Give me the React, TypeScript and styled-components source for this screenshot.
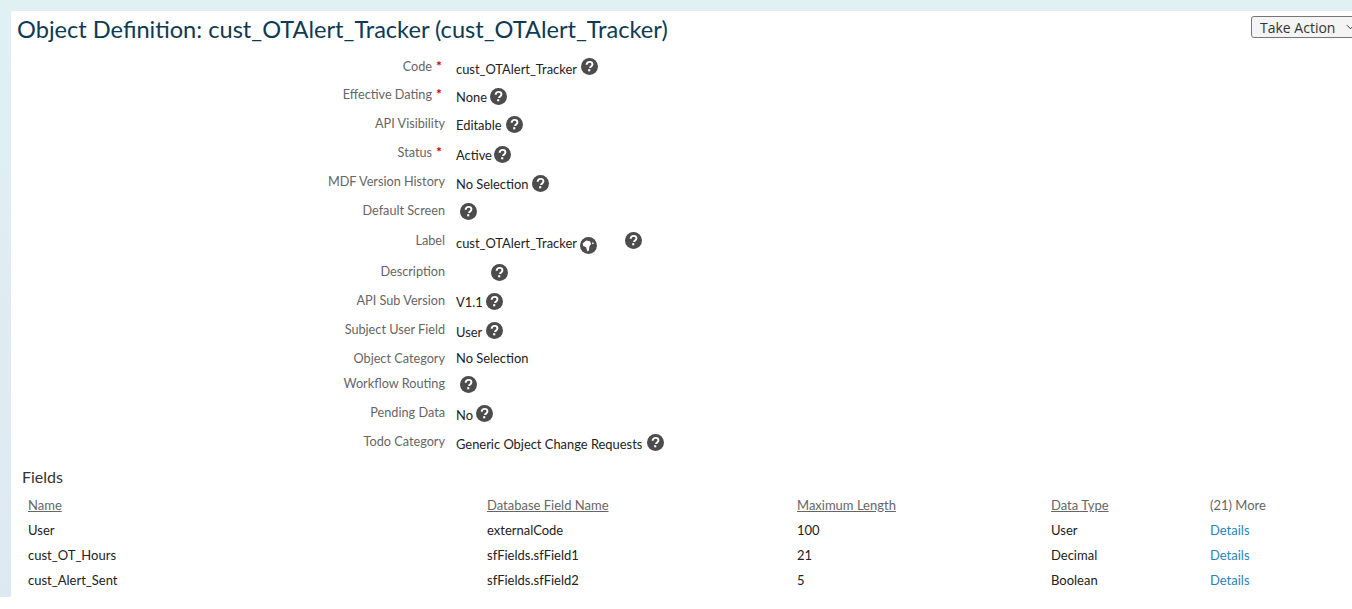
import React from 'react';
import styled, { createGlobalStyle } from 'styled-components';

const GlobalStyle = createGlobalStyle`
  html, body {
    margin: 0;
    padding: 0;
    background: #fff;
    overflow: hidden;
  }
`;

type FormField = {
  label: string;
  labelTop?: number;
  value?: string;
  required?: boolean;
  height: number;
  valueTop?: number;
  help?: number;
  helpTop?: number;
  globe?: boolean;
};

const formFields: FormField[] = [
  { label: 'Code', labelTop: 5, value: 'cust_OTAlert_Tracker', required: true, height: 29, valueTop: 8, help: 4, helpTop: -3 },
  { label: 'Effective Dating', value: 'None', required: true, height: 29, help: 3, helpTop: -1 },
  { label: 'API Visibility', value: 'Editable', height: 29, valueTop: 6, help: 4, helpTop: -1 },
  { label: 'Status', value: 'Active', required: true, height: 29, help: 2, helpTop: -1 },
  { label: 'MDF Version History', value: 'No Selection', height: 29, help: 4, helpTop: -1 },
  { label: 'Default Screen', height: 30, help: 4 },
  { label: 'Label', value: 'cust_OTAlert_Tracker', height: 31, globe: true, help: 28, helpTop: -3 },
  { label: 'Description', height: 29, help: 35 },
  { label: 'API Sub Version', value: 'V1.1', height: 29, valueTop: 6, help: 3, helpTop: -1 },
  { label: 'Subject User Field', value: 'User', height: 29, help: 4 },
  { label: 'Object Category', value: 'No Selection', height: 25, valueTop: 4 },
  { label: 'Workflow Routing', height: 29, help: 4 },
  { label: 'Pending Data', value: 'No', height: 29, help: 3 },
  { label: 'Todo Category', value: 'Generic Object Change Requests', height: 29, help: 5 },
];

const fieldRows = [
  { name: 'User', dbName: 'externalCode', maxLength: '100', type: 'User' },
  { name: 'cust_OT_Hours', dbName: 'sfFields.sfField1', maxLength: '21', type: 'Decimal' },
  { name: 'cust_Alert_Sent', dbName: 'sfFields.sfField2', maxLength: '5', type: 'Boolean' },
];

const HelpIcon = () => (
  <HelpSvg viewBox="0 0 18 18">
    <circle cx="9" cy="9" r="9" fill="#4c4c4c" />
    <path
      d="M6 7.1c0-1.8 1.3-3 3.1-3 1.8 0 3 1.1 3 2.6 0 1.2-.7 1.8-1.5 2.4-.7.5-1 .8-1 1.6"
      fill="none"
      stroke="#fff"
      strokeWidth="2.1"
    />
    <rect x="7.6" y="11.8" width="2.2" height="2.3" fill="#fff" />
  </HelpSvg>
);

const GlobeIcon = () => (
  <GlobeSvg viewBox="0 0 18 18">
    <circle cx="9" cy="9" r="9" fill="#4c4c4c" />
    <path d="M2.8 7 6.6 3.8l4 .6 1.2 3-1.8 2.4-.5 4.4-1.7 1.2-1.4-4.6-3-1.4z" fill="#fff" />
    <circle cx="13.6" cy="6.6" r="1" fill="#ddd" />
  </GlobeSvg>
);

const App = () => {
  return (
    <Page>
      <GlobalStyle />
      <Sheet>
        <TitleBar>
          <Title>Object Definition: cust_OTAlert_Tracker (cust_OTAlert_Tracker)</Title>
          <ActionButton>
            Take Action
            <Chevron viewBox="0 0 10 6">
              <path d="M1 1l4 4 4-4" fill="none" stroke="#333" strokeWidth="1.1" />
            </Chevron>
          </ActionButton>
        </TitleBar>

        <Form>
          {formFields.map((field) => (
            <FormRow key={field.label} $height={field.height}>
              <FieldLabel $top={field.labelTop ?? 4}>
                {field.label}
                {field.required && <Required>*</Required>}
              </FieldLabel>
              <FieldValue $top={field.valueTop ?? 7}>
                {field.value}
                {field.globe && <GlobeIcon />}
                {field.help !== undefined && (
                  <HelpSlot $gap={field.help} $top={field.helpTop ?? -2}>
                    <HelpIcon />
                  </HelpSlot>
                )}
              </FieldValue>
            </FormRow>
          ))}
        </Form>

        <SectionTitle>Fields</SectionTitle>
        <FieldsTable>
          <thead>
            <tr>
              <HeadCell><SortLink>Name</SortLink></HeadCell>
              <HeadCell><SortLink>Database Field Name</SortLink></HeadCell>
              <HeadCell><SortLink>Maximum Length</SortLink></HeadCell>
              <HeadCell><SortLink>Data Type</SortLink></HeadCell>
              <HeadCell>(21) More</HeadCell>
            </tr>
          </thead>
          <tbody>
            {fieldRows.map((row) => (
              <tr key={row.name}>
                <Cell>{row.name}</Cell>
                <Cell>{row.dbName}</Cell>
                <Cell>{row.maxLength}</Cell>
                <Cell>{row.type}</Cell>
                <Cell><DetailsLink>Details</DetailsLink></Cell>
              </tr>
            ))}
          </tbody>
        </FieldsTable>
      </Sheet>
    </Page>
  );
};

export default App;

const Page = styled.div`
  width: 1352px;
  height: 609px;
  box-sizing: border-box;
  overflow: hidden;
  background: linear-gradient(to bottom, #e0f0f3 0, #dde9f1 100%);
  padding: 11px 0 12px 11px;
  position: relative;
  font-family: 'Lato', 'Liberation Sans', sans-serif;

  &::after {
    content: '';
    position: absolute;
    left: 0;
    right: 0;
    bottom: 0;
    height: 12px;
    background: #fff;
  }
`;

const Sheet = styled.main`
  background: #fff;
  height: 586px;
  border-radius: 2px 0 0 0;
  overflow: hidden;
`;

const TitleBar = styled.header`
  display: flex;
  justify-content: space-between;
  align-items: flex-start;
  height: 42px;
  padding: 5px 0 0 6px;
  box-sizing: border-box;
`;

const Title = styled.h1`
  margin: 0;
  font-size: 23.6px;
  line-height: 26px;
  font-weight: 400;
  color: #0e3a54;
  white-space: nowrap;
`;

const ActionButton = styled.button`
  display: flex;
  align-items: center;
  width: 110px;
  height: 22px;
  margin-right: -9px;
  padding: 0 0 0 8px;
  box-sizing: border-box;
  background: #f4f4f4;
  border: 1px solid #767676;
  border-radius: 3px;
  font-family: 'Open Sans', 'Liberation Sans', sans-serif;
  font-size: 14px;
  color: #333;
  white-space: nowrap;
`;

const Chevron = styled.svg`
  width: 9px;
  height: 6px;
  margin-left: 11px;
  flex: none;
`;

const Form = styled.section`
  display: flex;
  flex-direction: column;
`;

const FormRow = styled.div<{ $height: number }>`
  display: grid;
  grid-template-columns: 434px 1fr;
  height: ${(props) => props.$height}px;
  column-gap: 11px;
`;

const FieldLabel = styled.div<{ $top: number }>`
  text-align: right;
  font-size: 12.7px;
  line-height: 16px;
  padding-top: ${(props) => props.$top}px;
  color: #666;
  white-space: nowrap;
`;

const Required = styled.span`
  color: #c00;
  font-size: 14px;
  font-weight: 700;
  margin-left: 4px;
  margin-right: 3px;
`;

const FieldValue = styled.div<{ $top: number }>`
  display: flex;
  align-items: flex-start;
  font-size: 12.9px;
  line-height: 16px;
  padding-top: ${(props) => props.$top}px;
  color: #222;
  white-space: nowrap;
`;

const HelpSlot = styled.span<{ $gap: number; $top: number }>`
  margin-left: ${(props) => props.$gap}px;
  margin-top: ${(props) => props.$top}px;
  display: inline-flex;
`;

const HelpSvg = styled.svg`
  width: 17px;
  height: 17px;
`;

const GlobeSvg = styled.svg`
  width: 17px;
  height: 17px;
  margin-left: 3px;
  margin-top: 2px;
`;

const SectionTitle = styled.h2`
  margin: 9px 0 0 11px;
  font-size: 16px;
  line-height: 20px;
  font-weight: 400;
  color: #333;
`;

const FieldsTable = styled.table`
  border-collapse: collapse;
  table-layout: fixed;
  width: 1300px;
  margin: 5px 0 0 12px;
  font-size: 13px;

  th:nth-child(1) { width: 454px; }
  th:nth-child(2) { width: 305px; }
  th:nth-child(3) { width: 249px; }
  th:nth-child(4) { width: 154px; }
`;

const HeadCell = styled.th`
  text-align: left;
  font-weight: 400;
  color: #666;
  padding: 0 0 0 5px;
  height: 25px;
`;

const SortLink = styled.span`
  text-decoration: underline;
`;

const Cell = styled.td`
  padding: 0 0 0 5px;
  height: 25px;
  color: #222;
`;

const DetailsLink = styled.a`
  color: #2a86ba;
`;
